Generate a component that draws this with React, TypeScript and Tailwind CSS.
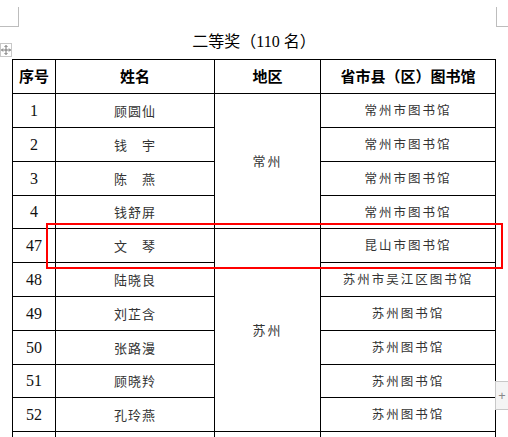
const rows = [
  { no: '1', name: '顾圆仙', lib: '常州市图书馆', h: 'h-[34px]', region: '常州', span: 4 },
  { no: '2', name: '钱　宇', lib: '常州市图书馆', h: 'h-[34px]' },
  { no: '3', name: '陈　燕', lib: '常州市图书馆', h: 'h-[34px]' },
  { no: '4', name: '钱舒屏', lib: '常州市图书馆', h: 'h-[33px]' },
  { no: '47', name: '文　琴', lib: '昆山市图书馆', h: 'h-[34px]', region: '苏州', span: 6 },
  { no: '48', name: '陆晓良', lib: '苏州市吴江区图书馆', h: 'h-[34px]' },
  { no: '49', name: '刘芷含', lib: '苏州图书馆', h: 'h-[34px]' },
  { no: '50', name: '张路漫', lib: '苏州图书馆', h: 'h-[34px]' },
  { no: '51', name: '顾晓羚', lib: '苏州图书馆', h: 'h-[33px]' },
  { no: '52', name: '孔玲燕', lib: '苏州图书馆', h: 'h-[34px]' },
];

const cjk = '[font-family:"Noto_Sans_CJK_SC",sans-serif]';
const serif = '[font-family:"Liberation_Serif","Noto_Sans_CJK_SC",serif]';
const cell = 'border-l border-t border-black p-0 text-center align-middle';

export default function App() {
  return (
    <div className="relative w-[508px] h-[437px] overflow-hidden bg-white">
      {/* page corner marks */}
      <div className="absolute left-0 top-[7px] w-[19px] h-[20px] border-r border-b border-[#bdbdbd]" />
      <div className="absolute left-[496px] top-[7px] w-[12px] h-[20px] border-l border-b border-[#bdbdbd]" />

      {/* table move handle */}
      <div className="absolute left-0 top-[43px] w-[12px] h-[14px] border border-[#c8c8c8] bg-white flex items-center justify-center">
        <svg width="10" height="10" viewBox="0 0 10 10" fill="none" stroke="#777" strokeWidth="1">
          <path d="M5 0.5V9.5M0.5 5H9.5" />
          <path d="M3.5 2L5 0.5L6.5 2M3.5 8L5 9.5L6.5 8M2 3.5L0.5 5L2 6.5M8 3.5L9.5 5L8 6.5" />
        </svg>
      </div>

      {/* add-column handle */}
      <div className="absolute left-[495px] top-[381px] w-[13px] h-[29px] border-t border-b border-l border-[#c8c8c8] bg-[#f4f4f4] flex items-center justify-center text-[#888] text-[13px] leading-none">
        +
      </div>

      <div className="pt-[33px] h-[59px]">
        <div className={`text-center text-[16px] leading-[18px] text-black ${serif}`}>
          二等奖（110 名）
        </div>
      </div>

      <table className="ml-[12px] border-separate border-spacing-0 table-fixed border-r border-b border-black w-[483px]">
        <colgroup>
          <col className="w-[43px]" />
          <col className="w-[159px]" />
          <col className="w-[106px]" />
          <col className="w-[175px]" />
        </colgroup>
        <thead>
          <tr>
            {['序号', '姓名', '地区', '省市县（区）图书馆'].map((t) => (
              <th key={t} className={`${cell} h-[34px] text-[15px] font-bold text-black ${cjk}`}>
                {t}
              </th>
            ))}
          </tr>
        </thead>
        <tbody>
          {rows.map((r) => (
            <tr key={r.no}>
              <td className={`${cell} ${r.h} text-[16px] text-[#111] ${serif}`}>{r.no}</td>
              <td className={`${cell} ${r.h} text-[13px] tracking-[1px] text-[#333] ${cjk}`}>{r.name}</td>
              {r.region && (
                <td rowSpan={r.span} className={`${cell} text-[13px] tracking-[2px] text-[#333] ${cjk}`}>
                  {r.region}
                </td>
              )}
              <td className={`${cell} ${r.h} text-[12.5px] tracking-[2px] text-[#333] ${cjk}`}>{r.lib}</td>
            </tr>
          ))}
          <tr>
            <td className={`${cell} h-[34px]`} />
            <td className={`${cell} h-[34px]`} />
            <td className={`${cell} h-[34px]`} />
            <td className={`${cell} h-[34px]`} />
          </tr>
        </tbody>
      </table>

      {/* highlight box */}
      <div className="absolute left-[46px] top-[223px] w-[457px] h-[46px] border-2 border-[#ff0000]" />
    </div>
  );
}
